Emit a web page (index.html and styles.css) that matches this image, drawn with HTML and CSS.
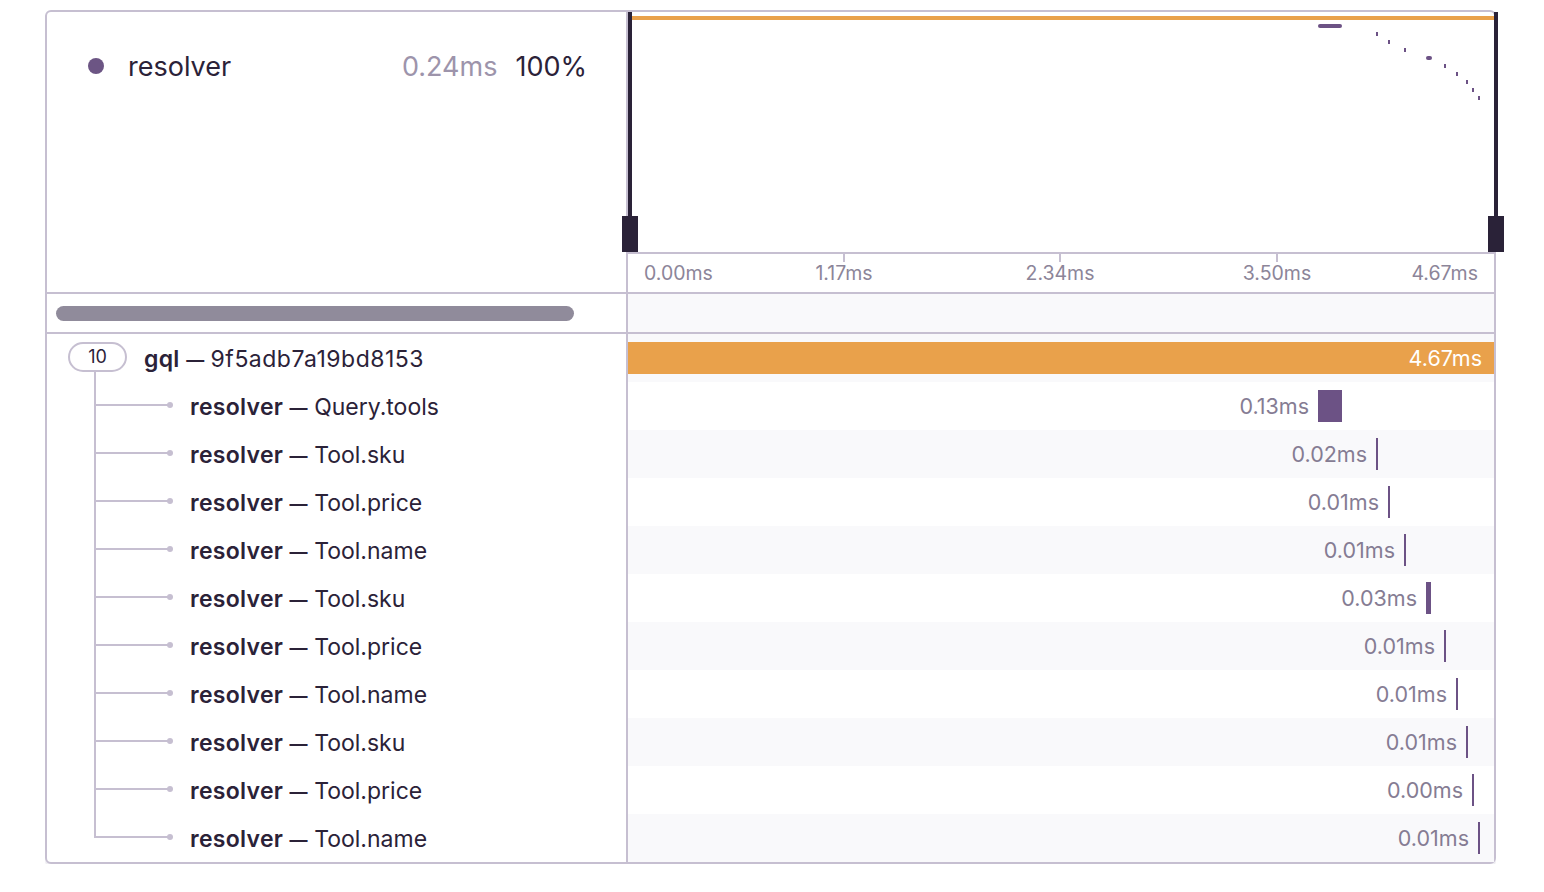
FILE: index.html
```html
<!DOCTYPE html>
<html>
<head>
<meta charset="utf-8">
<link rel="stylesheet" href="styles.css">
</head>
<body>
<div class="page">
  <div class="trace">
    <div class="top">
      <div class="col-left">
        <div class="legend">
          <span class="legend-dot"></span>
          <span class="legend-name">resolver</span>
          <span class="legend-dur">0.24ms</span>
          <span class="legend-pct">100%</span>
        </div>
      </div>
      <div class="col-right">
        <div class="minimap">
          <svg class="minimap-svg" width="866" height="240" viewBox="0 0 866 240">
            <rect x="4" y="4" width="862" height="4" fill="#e9a14b"/>
            <rect x="690" y="12" width="24" height="4" rx="2" fill="#6c5285"/>
            <rect x="748" y="20" width="2" height="4" fill="#6c5285"/>
            <rect x="760" y="28" width="2" height="4" fill="#6c5285"/>
            <rect x="776" y="36" width="2" height="4" fill="#6c5285"/>
            <rect x="798" y="44" width="6" height="4" rx="2" fill="#6c5285"/>
            <rect x="816" y="52" width="2" height="4" fill="#6c5285"/>
            <rect x="828" y="60" width="2" height="4" fill="#6c5285"/>
            <rect x="838" y="68" width="2" height="4" fill="#6c5285"/>
            <rect x="844" y="76" width="2" height="4" fill="#6c5285"/>
            <rect x="850" y="84" width="2" height="4" fill="#6c5285"/>
          </svg>
          <div class="handle handle-left"><span class="handle-line"></span><span class="handle-grip"></span></div>
          <div class="handle handle-right"><span class="handle-line"></span><span class="handle-grip"></span></div>
        </div>
        <div class="axis">
          <span class="tick" style="left:216px"></span>
          <span class="tick" style="left:432px"></span>
          <span class="tick" style="left:649px"></span>
          <span class="axis-label first">0.00ms</span>
          <span class="axis-label mid" style="left:216px">1.17ms</span>
          <span class="axis-label mid" style="left:432px">2.34ms</span>
          <span class="axis-label mid" style="left:649px">3.50ms</span>
          <span class="axis-label last">4.67ms</span>
        </div>
      </div>
    </div>

    <div class="scroll">
      <div class="col-left scroll-left"><div class="thumb"></div></div>
      <div class="col-right shade"></div>
    </div>

    <div class="rows">
      <div class="row">
        <div class="col-left root-cell">
          <div class="badge-col"><span class="badge">10</span><span class="stem"></span></div>
          <span class="name"><b>gql</b> <span class="dash">—</span> <span class="hex">9f5adb7a19bd8153</span></span>
        </div>
        <div class="col-right shade">
          <div class="bar root-bar"><span class="root-dur">4.67ms</span></div>
        </div>
      </div>

      <div class="row">
        <div class="col-left child-cell"><span class="branch"><span class="hline"></span><span class="knot"></span></span><span class="name"><b>resolver <span class="dash">—</span></b> Query.tools</span></div>
        <div class="col-right"><span class="lead" style="width:690px">0.13ms</span><span class="bar span-bar" style="width:24px"></span></div>
      </div>
      <div class="row">
        <div class="col-left child-cell"><span class="branch"><span class="hline"></span><span class="knot"></span></span><span class="name"><b>resolver <span class="dash">—</span></b> Tool.sku</span></div>
        <div class="col-right shade"><span class="lead" style="width:748px">0.02ms</span><span class="bar span-bar" style="width:2px"></span></div>
      </div>
      <div class="row">
        <div class="col-left child-cell"><span class="branch"><span class="hline"></span><span class="knot"></span></span><span class="name"><b>resolver <span class="dash">—</span></b> Tool.price</span></div>
        <div class="col-right"><span class="lead" style="width:760px">0.01ms</span><span class="bar span-bar" style="width:2px"></span></div>
      </div>
      <div class="row">
        <div class="col-left child-cell"><span class="branch"><span class="hline"></span><span class="knot"></span></span><span class="name"><b>resolver <span class="dash">—</span></b> Tool.name</span></div>
        <div class="col-right shade"><span class="lead" style="width:776px">0.01ms</span><span class="bar span-bar" style="width:2px"></span></div>
      </div>
      <div class="row">
        <div class="col-left child-cell"><span class="branch"><span class="hline"></span><span class="knot"></span></span><span class="name"><b>resolver <span class="dash">—</span></b> Tool.sku</span></div>
        <div class="col-right"><span class="lead" style="width:798px">0.03ms</span><span class="bar span-bar" style="width:5px"></span></div>
      </div>
      <div class="row">
        <div class="col-left child-cell"><span class="branch"><span class="hline"></span><span class="knot"></span></span><span class="name"><b>resolver <span class="dash">—</span></b> Tool.price</span></div>
        <div class="col-right shade"><span class="lead" style="width:816px">0.01ms</span><span class="bar span-bar" style="width:2px"></span></div>
      </div>
      <div class="row">
        <div class="col-left child-cell"><span class="branch"><span class="hline"></span><span class="knot"></span></span><span class="name"><b>resolver <span class="dash">—</span></b> Tool.name</span></div>
        <div class="col-right"><span class="lead" style="width:828px">0.01ms</span><span class="bar span-bar" style="width:2px"></span></div>
      </div>
      <div class="row">
        <div class="col-left child-cell"><span class="branch"><span class="hline"></span><span class="knot"></span></span><span class="name"><b>resolver <span class="dash">—</span></b> Tool.sku</span></div>
        <div class="col-right shade"><span class="lead" style="width:838px">0.01ms</span><span class="bar span-bar" style="width:2px"></span></div>
      </div>
      <div class="row">
        <div class="col-left child-cell"><span class="branch"><span class="hline"></span><span class="knot"></span></span><span class="name"><b>resolver <span class="dash">—</span></b> Tool.price</span></div>
        <div class="col-right"><span class="lead" style="width:844px">0.00ms</span><span class="bar span-bar" style="width:2px"></span></div>
      </div>
      <div class="row">
        <div class="col-left child-cell"><span class="branch last"><span class="hline"></span><span class="knot"></span></span><span class="name"><b>resolver <span class="dash">—</span></b> Tool.name</span></div>
        <div class="col-right shade"><span class="lead" style="width:850px">0.01ms</span><span class="bar span-bar" style="width:2px"></span></div>
      </div>
    </div>
  </div>
</div>
</body>
</html>
```

FILE: styles.css
```css
* { box-sizing: border-box; }
body {
  margin: 0;
  background: #ffffff;
  font-family: Inter, "Noto Sans", sans-serif;
  color: #2b2238;
}
.page {
  padding: 10px 0 0 45px;
}
.trace {
  width: 1451px;
  border: 2px solid #c6bfd1;
  border-radius: 6px;
  box-shadow: 0 3px 0 #f0eff3;
  background: #fff;
}
.top {
  display: flex;
  height: 282px;
  border-bottom: 2px solid #c6bfd1;
}
.col-left {
  width: 581px;
  flex: none;
  border-right: 2px solid #c6bfd1;
}
.col-right {
  flex: 1;
  position: relative;
  min-width: 0;
}
.shade { background: #f9f9fb; }

/* legend */
.legend {
  display: flex;
  align-items: center;
  height: 30px;
  margin-top: 39px;
  padding: 0 39px 0 41px;
  font-size: 27px;
}
.legend-dot {
  width: 16px;
  height: 16px;
  border-radius: 50%;
  background: #6c5584;
  margin-right: 24px;
}
.legend-name { flex: 1; }
.legend-dur { color: #9d94ab; margin-right: 18px; }

/* minimap */
.minimap {
  height: 240px;
  position: relative;
}
.minimap-svg { display: block; }
.handle {
  position: absolute;
  top: 0;
  width: 16px;
  height: 240px;
  display: flex;
  flex-direction: column;
  align-items: center;
}
.handle-left { left: -6px; }
.handle-right { left: 860px; }
.handle-line {
  width: 4px;
  flex: 1;
  background: #2a2238;
}
.handle-grip {
  width: 16px;
  height: 36px;
  background: #2a2238;
}
.axis {
  height: 40px;
  border-top: 2px solid #c6bfd1;
  position: relative;
  font-size: 19.5px;
  color: #8c8599;
}
.tick {
  position: absolute;
  top: 0;
  width: 2px;
  height: 8px;
  margin-left: -1px;
  background: #c6bfd1;
}
.axis-label {
  position: absolute;
  top: 0;
  line-height: 38px;
}
.axis-label.first { left: 16px; }
.axis-label.last { right: 16px; }
.axis-label.mid { transform: translateX(-50%); }

/* scroll row */
.scroll {
  display: flex;
  height: 40px;
  border-bottom: 2px solid #c6bfd1;
}
.scroll-left { padding: 12px 0 0 9px; }
.thumb {
  width: 518px;
  height: 15px;
  border-radius: 8px;
  background: #908b9b;
}

/* rows */
.row {
  display: flex;
  height: 48px;
}
.row .col-left {
  display: flex;
  align-items: center;
  font-size: 23px;
}
.row .col-right {
  display: flex;
  align-items: center;
}
.name { white-space: nowrap; padding-top: 1px; }
.name b { font-weight: 600; letter-spacing: 0.3px; }
.hex { letter-spacing: 0.5px; }
.dash {
  font-size: 18px;
  font-weight: 700;
  vertical-align: 1px;
}
.root-cell { padding-left: 21px; }
.badge-col {
  width: 59px;
  align-self: stretch;
  display: flex;
  flex-direction: column;
  padding-top: 8px;
  margin-right: 17px;
}
.badge {
  height: 30px;
  border: 2px solid #c6bfd1;
  border-radius: 15px;
  font-size: 18px;
  line-height: 26px;
  text-align: center;
  background: #fff;
}
.stem {
  flex: 1;
  width: 2px;
  margin-left: 26px;
  background: #c6bfd1;
}
.child-cell { padding-left: 47px; }
.branch {
  width: 96px;
  align-self: stretch;
  display: flex;
  align-items: center;
  background: linear-gradient(#c6bfd1, #c6bfd1) no-repeat 0 0 / 2px 100%;
  padding-left: 2px;
}
.branch.last { background-size: 2px 24px; }
.hline {
  width: 72px;
  height: 2px;
  margin-top: -2px;
  background: #c6bfd1;
}
.knot {
  width: 6px;
  height: 6px;
  margin-top: -2px;
  margin-left: -1px;
  border-radius: 50%;
  background: #c6bfd1;
}
.bar {
  height: 32px;
  flex: none;
}
.root-bar {
  width: 100%;
  background: #e9a14b;
  color: #fff;
  font-size: 21.5px;
  display: flex;
  align-items: center;
  justify-content: flex-end;
  padding-right: 12px;
}
.span-bar { background: #6c5285; }
.lead {
  flex: none;
  text-align: right;
  padding-right: 9px;
  font-size: 21.5px;
  color: #857c93;
}
```
